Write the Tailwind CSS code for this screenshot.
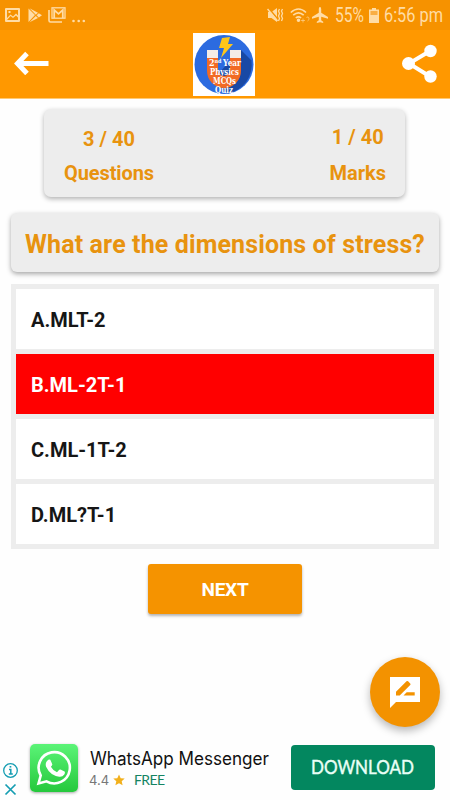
<!DOCTYPE html>
<html lang="en">
<head>
    <meta charset="UTF-8">
    <meta name="viewport" content="width=device-width, initial-scale=1.0">
    <title>2nd Year Physics MCQs Quiz</title>
    <script src="https://cdn.jsdelivr.net/npm/@tailwindcss/browser@4"></script>
</head>
<body class="bg-white font-[Roboto,sans-serif]">
    <div class="relative flex flex-col w-[450px] h-[800px] overflow-hidden bg-[#fefefe]">

        <!-- Status bar -->
        <div class="flex items-center justify-between h-[30px] shrink-0 bg-[#f69200] text-[#ffdca5] pl-[5px] pr-[5px]">
            <div class="flex items-center">
                <svg class="w-[15px] h-[14px]" viewBox="0 0 15 14" fill="currentColor"><path fill-rule="evenodd" d="M1 0h13q1 0 1 1v12q0 1-1 1H1q-1 0-1-1V1q0-1 1-1zm1 2v8l3.500-3.500 2.500 2 3-3 2 2V2zM3.500 3h2v2h-2zM2 12h11V9.500l-2-2L8 10 5.500 8z"/></svg>
                <svg class="w-[14px] h-[15px] ml-[8px]" viewBox="0 0 14 15" fill="currentColor"><path d="M.5.5L7 7 .5 14zM1.500.3L10 4.800 7.800 6.800zM1.500 14.300L7.800 8 10 10zM10.800 5.200L14 7.300l-3.200 2.200-2.200-2.200z"/></svg>
                <svg class="w-[18px] h-[16px] ml-[6px]" viewBox="0 0 18 16" fill="none" stroke="currentColor"><path d="M1 3v10.500Q1 15 2.500 15H14" stroke-width="1.600"/><rect x="4" y=".8" width="13" height="10.400" stroke-width="1.300"/><path d="M6.200 11V3l4.300 3.800L14.800 3v8" stroke-width="1.800"/></svg>
                <svg class="w-[14px] h-[4px] ml-[6px] mt-[11px]" viewBox="0 0 14 4" fill="currentColor"><circle cx="1.500" cy="2" r="1.300"/><circle cx="6.700" cy="2" r="1.300"/><circle cx="11.800" cy="2" r="1.300"/></svg>
            </div>
            <div class="flex items-center">
                <svg class="w-[17px] h-[16px]" viewBox="0 0 17 16" fill="currentColor"><path d="M1 5h3.500L10 1v14l-5.500-4H1z"/><path d="M1.500 1l10 12" stroke="#f69200" stroke-width="1.600"/><path d="M.5 2l10 12" stroke="currentColor" stroke-width="1.500"/><path d="M12.500 2l-1 2 1 2.500-1 2.500 1 2.500-1 2.500M15.500 2l-1 2 1 2.500-1 2.500 1 2.500-1 2.500" fill="none" stroke="currentColor" stroke-width="1.300"/></svg>
                <svg class="w-[20px] h-[15px] ml-[6px]" viewBox="0 0 20 15" fill="none" stroke="currentColor" stroke-width="1.600"><path d="M.8 4.500Q8.500-2.500 16 4.500M3.200 7.200q5.300-4.600 10.500 0M5.800 10q2.700-2.400 5.300 0"/><circle cx="8.500" cy="12.300" r="1" fill="currentColor"/><path d="M11 12.500h4m-2-2v4M16.500 9.500q2-1.500 2.500.5t-1.500 3" stroke-width="1" opacity=".6"/></svg>
                <svg class="w-[16px] h-[16px] ml-[2px]" viewBox="0 0 16 16" fill="currentColor"><path d="M8 0q1.200 0 1.200 2v3.800L16 10v1.800l-6.800-2v3.500l2 1.500V16L8 15.200 4.800 16v-1.200l2-1.500V9.800L0 11.800V10l6.800-4.200V2Q6.800 0 8 0z"/></svg>
                <svg class="w-[31px] h-[26px] ml-[6px] overflow-visible" viewBox="0 0 31 26" fill="currentColor"><text x="1" y="19.500" font-size="19.500" textLength="29" lengthAdjust="spacingAndGlyphs">55%</text></svg>
                <svg class="w-[10px] h-[15px] ml-[4px]" viewBox="0 0 10 15" fill="currentColor"><path d="M3 0h4v1.500h3V15H0V1.500h3z"/><path d="M1.500 3h7v4h-7z" fill="#f9ae43"/></svg>
                <svg class="w-[62px] h-[26px] ml-[4px] overflow-visible" viewBox="0 0 62 26" fill="currentColor"><text x="1" y="19.500" font-size="19.500" textLength="59" lengthAdjust="spacingAndGlyphs">6:56 pm</text></svg>
            </div>
        </div>

        <!-- App bar -->
        <header class="flex justify-between h-[69px] shrink-0 bg-[#ff9800] border-b border-[#ffc972] pl-[14px] pr-[13px]">
            <svg class="w-[35px] h-[24px] mt-[21px]" viewBox="0 0 35 24" fill="none" stroke="#fff" stroke-width="5"><path d="M34.500 12.500H4M13 2.500L3.500 12.500 13 22.500"/></svg>
            <svg class="w-[62px] h-[63px] mt-[3px] mr-[4px] overflow-visible" viewBox="0 0 62 63">
                <rect width="62" height="63" fill="#fff"/>
                <circle cx="31" cy="31.500" r="29.500" fill="#2c6be0"/>
                <path d="M48 17l10.500 10.500A29.500 29.500 0 0 1 35 60.500L18 48z" fill="#1949a5"/>
                <path d="M14 17h11v20a6 6 0 0 0 12 0V17h11v21a17 17 0 0 1-34 0z" fill="#f26a24"/>
                <path d="M14 17h11v8H14zM37 17h11v8H37z" fill="#f4ece6"/>
                <path d="M29 5l8-1-2 7h5L28 25l3-10h-5z" fill="#ffc61a"/>
                <g fill="#fff" font-family="'DejaVu Serif', serif" font-weight="700" font-size="8.500">
                    <text x="16" y="33" textLength="5.500" lengthAdjust="spacingAndGlyphs">2</text>
                    <text x="21.500" y="29.500" font-size="5.500" textLength="7" lengthAdjust="spacingAndGlyphs">nd</text>
                    <text x="30" y="33" textLength="18" lengthAdjust="spacingAndGlyphs">Year</text>
                    <text x="17" y="42" textLength="29" lengthAdjust="spacingAndGlyphs">Physics</text>
                    <text x="20" y="51" textLength="23" lengthAdjust="spacingAndGlyphs">MCQs</text>
                    <text x="22" y="60" textLength="18" lengthAdjust="spacingAndGlyphs">Quiz</text>
                </g>
            </svg>
            <svg class="w-[35px] h-[39px] mt-[14px]" viewBox="0 0 35 39" fill="#fff"><path d="M28 7L7 19.500l21 13" fill="none" stroke="#fff" stroke-width="4"/><circle cx="28.500" cy="7" r="6.200"/><circle cx="6.500" cy="19.500" r="6.500"/><circle cx="28.500" cy="32.500" r="6.200"/></svg>
        </header>

        <!-- Score -->
        <section class="flex justify-between w-[361px] h-[88px] shrink-0 mt-[10px] ml-[44px] pl-[20px] pr-[19px] pt-[14px] rounded-[7px] bg-[#ededed] shadow-[0_2px_5px_rgba(0,0,0,0.3)] text-[#e8930f] text-[20px] font-bold text-center">
            <div>
                <p class="leading-[32px]">3 / 40</p>
                <p class="leading-[36px] tracking-[-0.100px]">Questions</p>
            </div>
            <div>
                <p class="leading-[28px]">1 / 40</p>
                <p class="leading-[38px] mt-[3px]">Marks</p>
            </div>
        </section>

        <!-- Question -->
        <h1 class="flex items-center justify-center w-[428px] h-[59px] shrink-0 mt-[16px] ml-[11px] pt-[5px] rounded-[6px] bg-[#ededed] shadow-[0_2px_5px_rgba(0,0,0,0.35)] text-[#e8930f] text-[25px] tracking-[0.120px] font-bold whitespace-nowrap">What are the dimensions of stress?</h1>

        <!-- Answers -->
        <ul class="flex flex-col gap-[5px] w-[428px] shrink-0 mt-[12px] ml-[11px] p-[5px] bg-[#ededed] text-[#161616] text-[20px] font-bold">
            <li class="flex items-center h-[60px] pl-[15px] pt-[2px] bg-white">A.MLT-2</li>
            <li class="flex items-center h-[60px] pl-[15px] pt-[2px] bg-[#ff0000] text-white">B.ML-2T-1</li>
            <li class="flex items-center h-[60px] pl-[15px] pt-[2px] bg-white">C.ML-1T-2</li>
            <li class="flex items-center h-[60px] pl-[15px] pt-[2px] bg-white">D.ML?T-1</li>
        </ul>

        <button class="w-[154px] h-[50px] shrink-0 mt-[15px] ml-[148px] pt-[2px] rounded-[3px] bg-[#f59300] shadow-[0_2px_3px_rgba(0,0,0,0.3)] text-white text-[19px] tracking-[-0.200px] font-bold">NEXT</button>

        <!-- Review button -->
        <button class="absolute left-[370px] top-[657px] flex items-center justify-center size-[70px] rounded-full bg-[#f39200] shadow-[0_4px_8px_rgba(0,0,0,0.28)]">
            <svg class="w-[30px] h-[31px]" viewBox="0 0 30 31"><path d="M0 0h30v25H6l-6 6z" fill="#fff"/><path d="M6 18.500v-3.700L16.500 4.300q.8-.8 1.600 0l2.100 2.100q.8.800 0 1.600L9.700 18.500zM13.500 18.500l3.200-3.200h8v3.200z" fill="#f39200"/></svg>
        </button>

        <!-- Ad banner -->
        <footer class="flex mt-auto h-[60px] shrink-0">
            <div class="flex flex-col gap-[4px] w-[30px] pl-[3px] pt-[23px]">
                <svg class="size-[16px]" viewBox="0 0 16 16" fill="none" stroke="#159db2"><circle cx="7.500" cy="7.500" r="6.800" stroke-width="1.300"/><path d="M6 6.500h1.800v4.500M5.800 11h4" stroke-width="1.500"/><path d="M6.600 3h1.700v1.600H6.600z" fill="#159db2" stroke="none"/></svg>
                <svg class="size-[14px]" viewBox="0 0 14 14" fill="none" stroke="#159db2" stroke-width="1.700"><path d="M2.500 1.500l10 10M12.500 1.500l-10 10"/></svg>
            </div>
            <svg class="size-[48px] mt-[4px] rounded-[5px] shadow-[0_1px_3px_rgba(0,0,0,0.35)]" viewBox="0 0 48 48">
                <defs><linearGradient id="wa" x2="0" y2="1"><stop stop-color="#5bf477"/><stop offset="1" stop-color="#25c83c"/></linearGradient></defs>
                <rect width="48" height="48" fill="url(#wa)"/>
                <path d="M8.500 39.500l2.200-8A15.600 15.600 0 1 1 16.500 37.300z" fill="none" stroke="#fff" stroke-width="2.600"/>
                <path d="M17.500 16.500q1-1.300 2.800-.8l2 4.500q.2.900-1.400 2.600 2.100 3.900 6.100 5.500l2-2.400q.7-.8 1.500-.3l4 2q.9.600-.2 3-1.900 2.600-5.100 2.200-9.200-1.500-13.100-10-1.200-4 1.400-6.300z" fill="#fff"/>
            </svg>
            <div class="w-[201px] pl-[11px] pt-[6px]">
                <svg class="w-[182px] h-[26px] overflow-visible" viewBox="0 0 182 26"><text x="1" y="18.500" font-family="Inter, sans-serif" font-size="18" fill="#111" textLength="179" lengthAdjust="spacingAndGlyphs">WhatsApp Messenger</text></svg>
                <div class="flex items-center h-[16px] text-[14px] leading-[16px] whitespace-nowrap">
                    <span class="w-[24px] text-[#777777] text-[13px] font-[Inter,sans-serif]">4.4</span>
                    <svg class="size-[12px]" viewBox="0 0 12 12" fill="#f2b01c"><path d="M6 .5l1.700 3.700 4 .4-3 2.700.9 4L6 9.200l-3.600 2.100.9-4-3-2.700 4-.4z"/></svg>
                    <span class="ml-[9px] text-[#148462] tracking-[-0.600px] font-[Lato,sans-serif]">FREE</span>
                </div>
            </div>
            <button class="flex items-center justify-center w-[144px] h-[45px] mt-[5px] ml-[12px] rounded-[4px] bg-[#03875f]">
                <svg class="w-[104px] h-[26px] overflow-visible" viewBox="0 0 104 26"><text x="0" y="18.500" font-family="Lato, sans-serif" font-size="18.500" fill="#e9fff6" stroke="#e9fff6" stroke-width=".4" textLength="103" lengthAdjust="spacingAndGlyphs">DOWNLOAD</text></svg>
            </button>
        </footer>
    </div>
</body>
</html>
